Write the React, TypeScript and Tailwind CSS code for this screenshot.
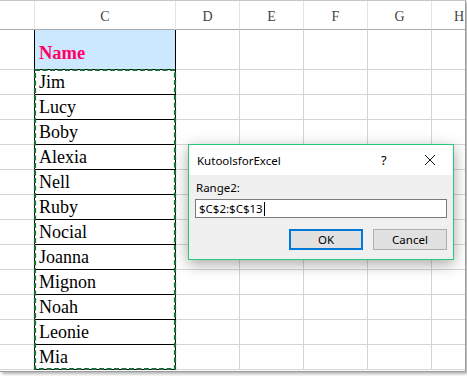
const names = ['Jim', 'Lucy', 'Boby', 'Alexia', 'Nell', 'Ruby', 'Nocial', 'Joanna', 'Mignon', 'Noah', 'Leonie', 'Mia']
const cols = ['D', 'E', 'F', 'G']

function EmptyCells() {
  return (
    <>
      {cols.map((c) => (
        <div key={c} className="w-[64px] shrink-0 border-r border-b border-[#d4d4d4]" />
      ))}
      <div className="flex-1 border-b border-[#d4d4d4]" />
    </>
  )
}

export default function App() {
  return (
    <div className="relative w-[467px] h-[376px] bg-white overflow-hidden" style={{ fontFamily: '"Liberation Serif", serif' }}>
      <div className="w-[466px] h-[372px] overflow-hidden border-t border-r border-b border-t-[#c6c6c6] border-r-[#9a9a9a] border-b-[#9a9a9a] shadow-[2px_2px_3px_rgba(0,0,0,0.3)] bg-white">
        {/* column headers */}
        <div className="flex h-[29px] text-[14px] text-[#444]">
          <div className="w-[35px] shrink-0 border-r border-b border-r-[#e4e4e4] border-b-[#ababab]" />
          <div className="w-[141px] shrink-0 border-r border-b border-r-[#e4e4e4] border-b-[#ababab] flex items-end justify-center pb-[2px]">C</div>
          {cols.map((c) => (
            <div key={c} className="w-[64px] shrink-0 border-r border-b border-r-[#e4e4e4] border-b-[#ababab] flex items-end justify-center pb-[2px]">{c}</div>
          ))}
          <div className="flex-1 border-b border-b-[#ababab] flex items-end justify-end pr-[1px] pb-[2px]">H</div>
        </div>

        {/* header row */}
        <div className="flex h-[40px]">
          <div className="w-[35px] shrink-0 border-r border-b border-r-black border-b-[#d4d4d4]" />
          <div className="w-[141px] shrink-0 border-r border-b border-r-black border-b-black bg-[#cce8ff] flex items-end pl-[4px] pb-[1px] text-[18.5px] font-bold text-[#ff0066]">Name</div>
          <EmptyCells />
        </div>

        {names.map((n) => (
          <div key={n} className="flex h-[25px]">
            <div className="w-[35px] shrink-0 border-r border-b border-r-black border-b-[#d4d4d4]" />
            <div className="w-[141px] shrink-0 border-r border-b border-black flex items-end pl-[4px] text-[18px] leading-[23px] text-black">{n}</div>
            <EmptyCells />
          </div>
        ))}
      </div>

      {/* copy selection marquee */}
      <svg className="absolute left-[33px] top-[68px]" width="144" height="304">
        <rect x="2" y="2" width="140" height="299" fill="none" stroke="#1b6b3a" strokeWidth="2.2" strokeDasharray="5 2.5" />
      </svg>

      {/* dialog */}
      <div className="absolute left-[188px] top-[144px] w-[266px] h-[116px] border border-[#2bc877] bg-[#f0f0f0] shadow-[0_4px_14px_rgba(0,0,0,0.35)] flex flex-col text-[11.5px] text-black" style={{ fontFamily: '"Noto Sans", sans-serif' }}>
        <div className="h-[30px] bg-white flex items-center pl-[8px] shrink-0">
          <span className="flex-1 pt-[2px]">KutoolsforExcel</span>
          <span className="w-[12px] text-[13px] mr-[31px] pt-[1px]">?</span>
          <svg width="12" height="12" viewBox="0 0 12 12" className="mr-[17px]">
            <path d="M1 1L11 11M11 1L1 11" stroke="#111" strokeWidth="1" />
          </svg>
        </div>
        <div className="flex flex-col px-[6px] pt-[5px]">
          <div className="pl-[1px] leading-[16px]">Range2:</div>
          <div className="mt-[3px] h-[19px] w-[252px] bg-white border border-[#7a7a7a] flex items-center pl-[3px] leading-none">
            $C$2:$C$13<span className="inline-block w-px h-[14px] bg-black ml-[1px]" />
          </div>
          <div className="flex justify-end gap-[10px] mt-[11px]">
            <button className="w-[74px] h-[21px] bg-[#e1e1e1] border-2 border-[#0078d7] leading-none">OK</button>
            <button className="w-[74px] h-[21px] bg-[#e1e1e1] border border-[#adadad] leading-none">Cancel</button>
          </div>
        </div>
      </div>
    </div>
  )
}
